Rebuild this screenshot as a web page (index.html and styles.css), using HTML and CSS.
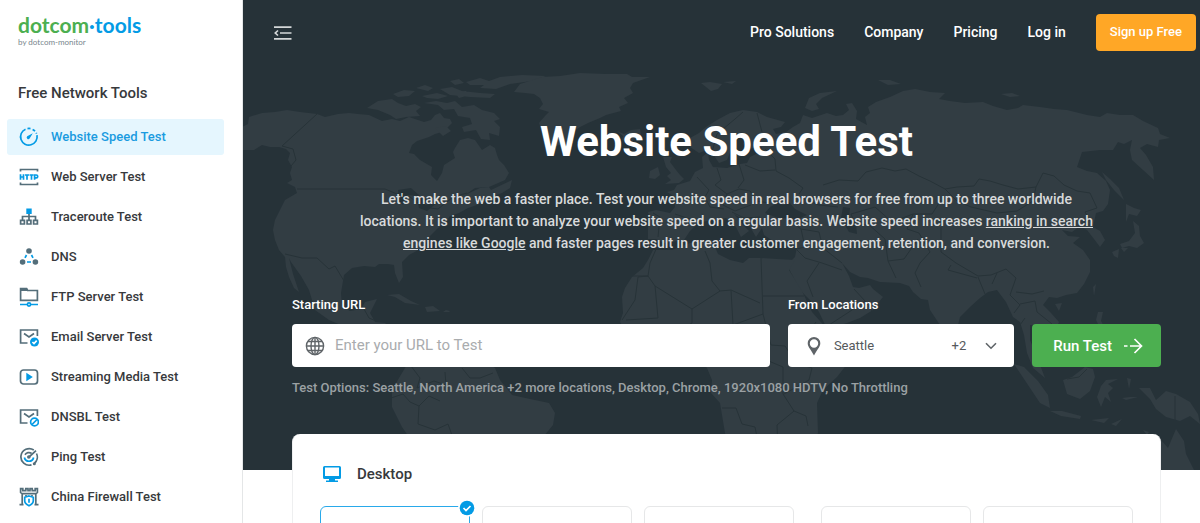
FILE: index.html
```html
<!DOCTYPE html>
<html lang="en">
<head>
<meta charset="utf-8">
<title>Website Speed Test</title>
<meta name="viewport" content="width=device-width, initial-scale=1">
<link rel="stylesheet" href="styles.css">
</head>
<body>
<div class="layout">
  <aside class="sidebar">
    <a class="logo" href="#">
      <span class="logo-name"><span class="logo-green">dotcom</span><span class="logo-blue">·tools</span></span>
      <span class="logo-by">by dotcom-monitor</span>
    </a>
    <h2 class="sidebar-title">Free Network Tools</h2>
    <nav class="tools">
      <a class="tool tool-active" href="#">
        <svg class="icon" viewBox="0 0 20 20"><g class="b"><path d="M6.5 2.2A8.3 8.3 0 1 0 18 8.2" /><path d="M8.500 1.600A8.300 8.300 0 0 1 11.500 1.600M13.600 2.400A8.300 8.300 0 0 1 16 4.200M17.200 5.800L17.600 6.700"/></g><path class="bf" d="M13.800 6.200L8.200 9.300a1.600 1.600 0 1 0 2.400 2.300z"/></svg>
        Website Speed Test</a>
      <a class="tool" href="#">
        <svg class="icon" viewBox="0 0 20 20"><path class="g" d="M1.500 4.500V2.500h17v2M1.500 15.500v2h17v-2"/><path class="b" d="M1.500 7.200v5.600M4.500 7.200v5.600M1.500 10h3M6 8h4M8 8v4.800M10.500 8h4M12.500 8v4.800M15.600 12.800V8h1.700a1.300 1.300 0 0 1 0 2.800h-1.700"/></svg>
        Web Server Test</a>
      <a class="tool" href="#">
        <svg class="icon" viewBox="0 0 20 20"><path class="g" d="M10 7v6M3.500 13V9.500h13V13M1.600 13.300h3.800v3.700H1.600zM8.100 13.300h3.800v3.700H8.100zM14.600 13.300h3.800v3.700h-3.800z"/><path class="bf" d="M7.300 1.500h5.400v5.500H7.300z"/></svg>
        Traceroute Test</a>
      <a class="tool" href="#">
        <svg class="icon" viewBox="0 0 20 20"><g class="gf"><circle cx="10" cy="4" r="2.800"/><circle cx="3.600" cy="15" r="2.800"/><circle cx="16.400" cy="15" r="2.800"/></g><path class="b" d="M7.500 8L6 10.800M12.500 8L14 10.800M8 15h4"/></svg>
        DNS</a>
      <a class="tool" href="#">
        <svg class="icon" viewBox="0 0 20 20"><path class="g" d="M1.600 13.300V1.700h6l1 1.800h9.800v9.800z"/><path class="gf" d="M1 1h7l1 3H1z"/><path class="b" d="M1 17.500h7M12 17.500h7"/><circle class="b" cx="10" cy="17.500" r="1.600"/></svg>
        FTP Server Test</a>
      <a class="tool" href="#">
        <svg class="icon" viewBox="0 0 20 20"><path class="g" d="M8.500 16H1.600V3h16.800v6M5 6.500l5 3.500 5-3.500"/><circle class="bf" cx="15.500" cy="15" r="4.500"/><path class="w" d="M13.400 15l1.600 1.600 2.700-2.900"/></svg>
        Email Server Test</a>
      <a class="tool" href="#">
        <svg class="icon" viewBox="0 0 20 20"><rect class="g" x="1.500" y="3" width="17" height="14" rx="3"/><path class="bf" d="M7.300 5.800l6.500 4.200-6.500 4.200z"/></svg>
        Streaming Media Test</a>
      <a class="tool" href="#">
        <svg class="icon" viewBox="0 0 20 20"><path class="g" d="M8.500 16H1.600V3h16.800v6M5 6.500l5 3.500 5-3.500"/><circle class="b" cx="15.500" cy="15" r="3.900"/><path class="b" d="M13 17.500l5-5"/></svg>
        DNSBL Test</a>
      <a class="tool" href="#">
        <svg class="icon" viewBox="0 0 20 20"><path class="g" d="M14.800 3A8.300 8.300 0 1 0 12.500 17.900M17.500 6.500a8.300 8.300 0 0 1-2.200 10"/><path class="g" d="M6 7.800A4.600 4.600 0 0 1 12.500 6.300M10 10L17 3.600"/><path class="b" d="M5.400 10.500a4.700 4.700 0 0 0 9.200 0"/><circle class="gf" cx="9.800" cy="10" r="1.800"/><circle class="gf" cx="15.300" cy="16.800" r="1.500"/></svg>
        Ping Test</a>
      <a class="tool" href="#">
        <svg class="icon" viewBox="0 0 20 20"><path class="g" d="M0.500 17.700h4M15.500 17.700h4M3.200 17.700V7L1.600 5.500V1.700h2.200v2h3v-2h2.200v2h2v-2h2.200v2h3v-2h2.200v3.800L16.800 7v10.700M3 6.700h14M7 9.500V8M13 9.500V8"/><path class="bk" d="M10 9l4.300 1.300v3.500q0 3-4.300 5-4.300-2-4.300-5v-3.500z"/><path class="b" d="M10 11.800v4"/></svg>
        China Firewall Test</a>
    </nav>
  </aside>

  <main class="main">
    <section class="hero">
      <svg class="map" viewBox="243 0 957 470" preserveAspectRatio="xMidYMin slice" aria-hidden="true">
        <g class="land">
          <path d="M242 127L248 124 249 117 262 113 275 112 287 110 300 112 317 114 325 117 338 114 349 113 358 114 369 115 382 121 392 119 400 121 409 117 424 122 431 120 435 115 440 113 444 118 450 119 452 123 446 129 442 132 435 134 429 137 417 141 412 145 409 153 414 154 420 160 432 167 431 175 437 181 442 173 444 165 455 158 453 152 455 148 460 140 468 138 475 140 482 150 490 145 495 148 497 155 499 160 504 165 509 173 505 180 489 187 475 188 465 195 480 188 489 187 491 190 512 180 510 188 502 193 489 198 482 203 474 206 468 208 459 213 450 216 446 222 438 228 429 237 424 247 409 255 402 262 403 277 399 283 395 273 394 265 388 264 379 264 375 267 364 266 352 268 344 275 341 293 342 306 350 311 361 309 365 302 377 299 370 313 375 322 385 323 392 330 380 335 350 329 329 320 315 310 309 290 301 276 291 262 289 258 293 274 299 292 294 288 289 277 286 267 285 257 279 250 275 240 273 230 275 220 285 200 297 193 295 187 287 183 292 180 290 173 292 167 288 160 290 153 286 149 279 147 270 147 262 145 254 150 242 150z"/>
          <path d="M367 108L378 101 392 99 398 103 406 106 415 104 421 107 416 111 420 116 406 117 396 119 390 115 378 110zM393 94L404 90 415 91 409 96 398 97zM422 96L437 93 448 96 438 99 427 98zM416 88L425 85 433 88 428 91zM424 103L436 101 447 103 455 101 462 107 474 105 482 110 494 113 500 119 494 121 500 127 499 136 489 133 490 140 481 139 476 130 464 132 462 127 472 124 470 118 458 116 454 109 444 110 438 105zM440 89L452 87 462 91 480 93 495 94 490 98 470 97 450 95zM466 82L480 78 489 81 500 77 522 75 546 76 532 81 510 84 496 89 480 88 484 85 470 85zM450 81L459 79 464 83 455 85zM435 128L446 126 451 131 443 136zM455 93L466 91 470 95 459 98z"/>
          <path d="M514 92L520 84 542 77 560 76 580 73 606 74 627 74 632 77 650 77 633 83 630 88 633 93 624 98 628 103 619 107 621 111 606 115 600 118 588 123 580 127 571 133 567 143 556 146 544 137 539 123 545 116 549 112 539 109 543 104 540 98 534 94 525 93z"/>
          <path d="M617 131L624 134 631 130 640 129 641 135 632 141 622 140 623 136zM663 157L672 157 670 162 676 170 680 175 684 179 679 183 665 184 671 180 667 176 671 173 666 167zM650 171L658 167 660 175 655 179 649 178zM701 83L710 82 722 84 718 89 711 91zM723 82L736 81 732 84zM805 108L809 98 820 93 837 91 822 98 816 104 819 109 812 111zM878 80L890 80 901 84 888 85zM1001 94L1012 93 1020 96 1010 97z"/>
          <path d="M648 227L650 219 648 212 656 210 670 213 675 207 675 197 667 192 674 190 677 185 690 181 695 172 703 168 702 157 708 152 709 160 713 167 727 168 740 164 747 163 750 157 760 152 762 147 748 149 743 144 747 134 741 132 733 141 731 150 727 160 719 163 713 154 710 149 699 153 690 147 690 138 699 133 706 127 717 120 730 113 743 110 757 112 767 117 785 122 781 127 773 129 776 134 786 132 793 127 800 123 803 115 812 118 827 113 836 116 843 115 849 110 846 104 852 103 857 111 856 119 867 125 865 117 870 113 868 107 876 102 890 97 903 91 915 89 930 92 945 93 939 99 950 101 965 103 983 102 993 106 1007 110 1018 108 1023 105 1040 107 1054 109 1067 110 1075 112 1087 115 1100 117 1107 113 1120 115 1133 115 1143 121 1158 128 1160 134 1170 138 1159 140 1158 147 1147 144 1140 148 1146 155 1153 167 1154 180 1143 170 1132 160 1130 150 1132 140 1124 144 1118 142 1113 150 1100 150 1082 152 1077 167 1087 171 1097 173 1106 181 1110 190 1108 204 1103 211 1096 213 1093 227 1100 231 1105 240 1100 247 1094 239 1087 230 1080 226 1072 232 1062 230 1068 236 1080 237 1073 243 1083 250 1090 260 1090 272 1084 284 1077 293 1066 295 1057 298 1049 297 1043 305 1051 313 1059 322 1055 331 1044 341 1041 332 1034 325 1030 325 1030 340 1037 357 1045 378 1033 368 1027 353 1024 335 1020 322 1013 317 1006 302 997 290 988 292 980 298 970 307 960 317 957 329 950 336 940 325 930 310 928 300 921 299 913 292 909 286 900 283 880 282 868 278 860 277 850 272 842 263 849 276 853 287 859 288 870 285 873 289 883 297 878 303 873 310 860 318 847 323 827 329 819 312 810 300 800 290 787 265 795 257 797 247 792 242 773 241 764 235 762 228 756 237 749 225 742 219 734 214 745 227 749 231 741 237 736 227 726 218 716 220 707 221 698 223 690 231 684 240 664 243 656 239 648 239z"/>
          <path d="M795 260L777 259 760 258 749 258 743 263 730 260 718 254 712 240 690 243 672 250 653 250 648 260 643 268 632 277 625 288 622 297 623 313 620 322 628 335 643 350 675 353 695 355 707 368 712 380 711 393 720 403 725 433 735 470 800 470 818 433 817 403 823 390 837 377 858 350 869 331 845 334 827 329 812 312 802 291 789 270z"/>
          <path d="M405 368L399 378 392 390 392 407 402 427 411 440 425 470 530 470 544 436 553 425 555 413 549 403 530 399 512 395 500 380 495 368 475 355 455 347 420 345z"/>
          <path d="M387 295L399 294 411 301 420 305 405 303 395 297zM425 307L433 306 440 311 427 312zM446 310L450 311 449 312 443 312z"/>
          <path d="M1102 172L1110 179 1119 188 1124 200 1114 190 1106 180zM1126 204L1134 208 1141 210 1137 216 1129 214 1126 222zM1133 221L1139 226 1140 236 1144 243 1137 248 1129 246 1122 248 1120 244 1129 241 1135 233zM1112 252L1119 249 1118 258 1114 256zM1121 248L1128 248 1124 252zM1093 287L1096 284 1094 296zM1055 304L1062 303 1059 311zM1098 312L1103 312 1101 321 1106 330 1100 328 1096 320z"/>
          <path d="M1014 364L1024 367 1038 381 1048 395 1050 408 1040 403 1030 388zM1050 411L1062 411 1081 416 1080 419 1061 416zM1063 380L1072 377 1085 367 1093 369 1095 377 1090 391 1080 399 1067 394zM1101 386L1106 380 1118 379 1108 384 1113 388 1108 393 1111 402 1105 397 1101 407 1097 397zM1091 420L1109 418 1104 423zM1111 424L1122 419 1116 426zM1127 378L1131 379 1129 389zM1122 398L1130 397 1138 397 1126 400zM1139 388L1150 388 1156 400 1166 391 1176 394 1190 402 1198 414 1200 424 1190 416 1180 421 1166 417 1156 409 1150 399zM1143 430L1149 432 1147 435zM1161 440L1168 448 1176 429 1184 441 1186 454 1194 470 1161 470z"/>
        </g>
        <path class="sea" d="M765 213L770 207 778 203 784 205 789 202 795 209 807 215 798 219 778 218zM843 207L850 208 849 217 856 223 857 234 849 232 841 218zM398 190L411 188 420 196 407 195 403 205 399 201zM417 197L426 199 425 205 438 202 427 211 419 208z"/>
        <path class="borders" d="M317 114L282 146 293 149 296 160 291 166M297 189H385L397 194 410 197 423 207 438 209 453 197 467 193M285 254L302 258 317 258 329 269 335 266 344 281M364 309L369 318 376 321M411 366L420 378 417 388 434 381 446 385 445 372M462 368L470 378 480 378 493 373M391 398L403 394 410 402 419 406 418 424 435 430 448 424 453 438M419 406L429 396 440 401M648 276H632M657 247L650 263 648 276 638 277 635 300 622 320M648 276L655 286 658 318 626 320M655 286L692 309 720 291 712 281 710 263 705 251M761 258L763 314 733 325 731 290 720 291M763 296H804M731 290L760 303M692 309V323L669 337M733 325L722 347 704 362M763 314L771 345 785 346 796 363 800 345 816 322M704 362H735L748 346 771 362 783 367V394L794 411 777 425 779 470M722 408H736L742 424 755 427 757 437M796 363L812 368 809 380 784 394M794 411L806 416 808 426M653 213L660 217 658 237M675 214L698 222M697 177L709 190 705 197 710 207 724 209M717 168L721 180 715 185 727 194 739 189 750 191 757 201 769 203M739 164L744 180 738 188M712 152L717 134 735 119 743 112M757 113L762 132M765 149L775 159 776 171 789 178 803 188 799 194M745 165L760 171 775 170M727 194L723 205 735 211 751 205M732 212L744 218 760 217M755 218V227M789 220L801 229 805 247 796 249M796 249L805 258 822 263 842 270M801 229L819 232 823 248 842 263M856 226L868 224 885 239 888 261 896 278M801 198L819 205 838 207M823 185L839 180 858 181 866 172 882 168 895 171 906 169 919 176 930 181 945 189 957 187 974 186 979 179 990 181 1003 185 1018 189 1036 187 1043 173 1054 176 1064 185 1077 191 1090 193 1097 208 1085 212 1093 226M945 189L957 201 971 207 997 213 1017 211 1033 201 1036 187M856 226L851 214 875 207 892 222 913 214 932 214 941 200M913 214L907 229 919 233 930 252 920 263 915 273 921 287M888 261L904 259 918 239M941 227V252L956 263 978 276 991 275 1006 269 1016 278 1010 295 1020 305 1014 313M951 265L948 270 977 278M978 277L985 294M997 273L992 284M1016 292L1032 294 1044 291M1020 304L1035 301 1037 312 1052 324M1025 318L1020 325M819 263L807 281 813 297M854 289L865 301 872 311M829 325L849 312 865 301M1175 396V421M1067 379L1079 377 1087 369"/>
      </svg>

      <header class="topbar">
        <button class="menu-toggle" type="button" aria-label="Collapse menu">
          <svg class="menu-icon" viewBox="0 0 18 14"><path d="M0 1.200h17.500M6 7h11.500M0 12.800h17.500M4 4.500L1.300 7 4 9.500"/></svg>
        </button>
        <nav class="topnav">
          <a href="#">Pro Solutions</a>
          <a href="#">Company</a>
          <a href="#">Pricing</a>
          <a href="#">Log in</a>
          <a class="signup" href="#">Sign up Free</a>
        </nav>
      </header>

      <div class="intro">
        <h1>Website Speed Test</h1>
        <p>Let's make the web a faster place. Test your website speed in real browsers for free from up to three worldwide locations. It is important to analyze your website speed on a regular basis. Website speed increases <a href="#">ranking in search engines like Google</a> and faster pages result in greater customer engagement, retention, and conversion.</p>
      </div>

      <form class="test-form">
        <div class="field field-url">
          <label for="url">Starting URL</label>
          <div class="box">
            <svg class="globe" viewBox="0 0 20 20"><circle cx="10" cy="10" r="8.600"/><ellipse cx="10" cy="10" rx="4" ry="8.600"/><path d="M10 1.400v17.200M1.400 10h17.200M2.700 5.500h14.600M2.700 14.500h14.600"/></svg>
            <input id="url" type="text" placeholder="Enter your URL to Test">
          </div>
        </div>
        <div class="field field-loc">
          <label for="location">From Locations</label>
          <div class="box box-loc">
            <svg class="pin" viewBox="0 0 14 20"><path fill-rule="evenodd" d="M7 1a6.300 6.300 0 0 1 6.300 6.300C13.300 11 9.500 14.500 7 19.500 4.500 14.500.7 11 .7 7.300A6.300 6.300 0 0 1 7 1zm0 2.300a4.200 4.200 0 1 0 0 8.400 4.200 4.200 0 0 0 0-8.400z"/></svg>
            <select id="location"><option>Seattle</option></select>
            <span class="more">+2</span>
            <svg class="chevron" viewBox="0 0 12 8"><path d="M1 1.200l5 5 5-5"/></svg>
          </div>
        </div>
        <button class="run" type="submit">Run Test
          <svg class="arrow" viewBox="0 0 20 16"><path d="M1 8h3.500M7 8h11.500M11.500 1l7 7-7 7"/></svg>
        </button>
      </form>
      <p class="summary">Test Options: Seattle, North America +2 more locations, Desktop, Chrome, 1920x1080 HDTV, No Throttling</p>
    </section>

    <section class="card">
      <h2 class="card-title">
        <svg class="monitor" viewBox="0 0 20 18"><path fill-rule="evenodd" d="M2.500 1h15A1.500 1.500 0 0 1 19 2.500v10a1.500 1.500 0 0 1-1.500 1.500h-15A1.500 1.500 0 0 1 1 12.500v-10A1.500 1.500 0 0 1 2.500 1zM3 2.500V11h14V2.500zM7 14h6v1.500h3V17H4v-1.500h3z"/></svg>
        Desktop</h2>
      <div class="groups">
        <div class="group">
          <div class="option option-on">
            <svg class="tick" viewBox="0 0 18 18"><circle class="tick-ring" cx="9" cy="9" r="9"/><circle class="bf" cx="9" cy="9" r="7.300"/><path d="M5.500 9l2.500 2.500 4.500-4.500"/></svg>
          </div>
          <div class="option"></div>
          <div class="option"></div>
        </div>
        <div class="group">
          <div class="option"></div>
          <div class="option"></div>
        </div>
      </div>
    </section>
  </main>
</div>
</body>
</html>
```
FILE: styles.css
```css
* { box-sizing: border-box; }
body {
  margin: 0;
  font-family: Roboto, "Liberation Sans", sans-serif;
  font-size: 14px;
  color: #37393c;
  background: #fff;
}
h1, h2, p { margin: 0; }
a { color: inherit; text-decoration: none; }
button, input, select { font: inherit; color: inherit; border: 0; padding: 0; background: none; }
svg { display: block; flex: none; }

.layout { display: flex; height: 100vh; overflow: hidden; }

/* sidebar */
.sidebar { flex: none; width: 243px; padding: 13px 18px 0 7px; border-right: 1px solid #e4e6e7; }
.logo { display: block; margin-left: 11px; font-family: Lato, sans-serif; }
.logo-name { display: block; font-size: 21px; line-height: 24px; font-weight: 700; }
.logo-green { color: #4caf50; }
.logo-blue { color: #039be5; }
.logo-by { display: block; font-size: 8px; line-height: 10px; color: #78868d; }
.sidebar-title { margin: 36px 0 16px 11px; font-size: 15px; line-height: 20px; font-weight: 500; }
.tools { display: flex; flex-direction: column; gap: 4px; }
.tool { display: flex; align-items: center; gap: 12px; height: 36px; padding: 0 0 2px 12px; border-radius: 3px; font-size: 13px; font-weight: 500; }
.tool-active { background: #e5f6fe; color: #1a9be0; }
.icon { width: 20px; height: 20px; margin-top: 2px; }
.g, .b, .w, .bk { fill: none; stroke-width: 1.7; }
.g { stroke: #546e7a; }
.b, .bk { stroke: #039be5; }
.bk { fill: #fff; }
.w { stroke: #fff; }
.gf { fill: #546e7a; }
.bf { fill: #039be5; }

/* hero */
.main { flex: 1; min-width: 0; }
.hero { position: relative; padding-bottom: 73px; background: #263238; color: #fff; }
.map { position: absolute; inset: 0; width: 100%; height: 100%; }
.land { fill: #323d43; }
.sea { fill: #263238; }
.borders { fill: none; stroke: #273338; stroke-width: 1; stroke-linejoin: round; }
.topbar, .intro, .test-form, .summary { position: relative; }
.topbar { display: flex; align-items: center; justify-content: space-between; padding: 14px 4px 0 31px; }
.menu-icon { width: 18px; height: 14px; fill: none; stroke: #d4d7d8; stroke-width: 1.7; }
.topnav { display: flex; align-items: center; gap: 30px; font-size: 14px; font-weight: 500; }
.topnav a { padding-bottom: 2px; }
.topnav .signup { display: flex; align-items: center; height: 37px; padding: 0 14px 2px; border-radius: 4px; background: #ffa726; font-size: 13px; }
.intro { padding: 65px 89px 0 99px; text-align: center; }
.intro h1 { font-size: 42px; line-height: 52px; font-weight: 700; }
.intro p { max-width: 752px; margin: 20px auto 0; font-size: 14px; line-height: 22px; font-weight: 500; color: #d8dadb; }
.intro p a { text-decoration: underline; }
.test-form { display: flex; align-items: flex-end; gap: 18px; margin: 42px 39px 0 49px; }
.field label { display: block; margin-bottom: 10px; font-size: 13px; line-height: 18px; font-weight: 500; }
.field-url { flex: 477; }
.field-loc { flex: 226; }
.box { display: flex; align-items: center; height: 43px; padding: 0 13px; border-radius: 4px; background: #fff; color: #55595c; }
.box input { flex: 1; min-width: 0; height: 100%; padding-bottom: 2px; margin-left: 10px; font-size: 15px; outline: 0; }
.box input::placeholder { color: #a9acae; }
.globe { width: 20px; height: 20px; fill: none; stroke: #5f6468; stroke-width: 1.4; }
.box-loc { padding: 0 17px 0 19px; font-size: 13px; }
.pin { width: 14px; height: 20px; fill: #5f6468; }
.box select { flex: 1; min-width: 0; margin-left: 13px; appearance: none; outline: 0; }
.chevron { width: 12px; height: 8px; margin-left: 19px; fill: none; stroke: #5f6468; stroke-width: 1.6; }
.run { flex: none; display: flex; align-items: center; gap: 11px; height: 43px; padding: 0 18px 0 21px; border-radius: 4px; background: #4caf50; color: #fff; font-size: 15px; font-weight: 500; }
.arrow { width: 20px; height: 16px; fill: none; stroke: #fff; stroke-width: 1.7; }
.summary { margin: 12px 39px 0 49px; font-size: 13px; line-height: 18px; font-weight: 500; color: #9ba1a4; }

/* device card */
.card { position: relative; margin: -36px 39px 0 49px; padding: 30px 27px; border: 1px solid #eeeff0; border-top: 0; border-radius: 8px; background: #fff; }
.card-title { display: flex; align-items: center; gap: 15px; padding-left: 2px; font-size: 15px; line-height: 20px; font-weight: 500; }
.monitor { width: 20px; height: 18px; fill: #039be5; }
.groups { display: grid; grid-template-columns: 474fr 312fr; gap: 27px; margin-top: 22px; }
.group { display: flex; gap: 12px; }
.option { position: relative; flex: 1; height: 90px; border: 1px solid #e6e7e8; border-radius: 6px; }
.option-on { border-color: #29a9ea; }
.tick { position: absolute; top: -8px; right: -7px; width: 18px; height: 18px; fill: none; stroke: #fff; stroke-width: 1.7; }
.tick .bf { fill: #039be5; stroke: none; }
.tick-ring { fill: #fff; stroke: none; }
```
